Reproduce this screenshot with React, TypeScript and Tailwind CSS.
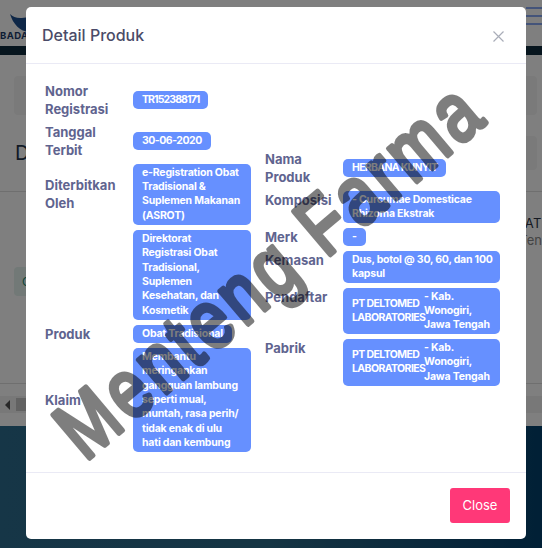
import { ReactNode } from "react";

const Badge = ({
  children,
  wide,
  tight,
}: {
  children: ReactNode;
  wide?: boolean;
  tight?: string;
}) => (
  <span
    className={`block rounded-[5px] bg-[#6690ff] py-[2px] pl-[9px] text-[10.5px] leading-[14.3px] font-bold whitespace-nowrap text-white ${wide ? "w-full" : "w-fit pr-[9px]"} ${tight ?? "tracking-[-0.2px]"}`}
  >
    {children}
  </span>
);

const Label = ({ children, top }: { children?: ReactNode; top?: boolean }) => (
  <span className={`text-[13px] leading-[18px] font-bold text-[#5f648f] ${top ? "self-start" : ""}`}>{children}</span>
);

const Company = () => (
  <span className="flex items-center rounded-[5px] bg-[#6690ff] py-[2px] pl-[9px] text-[10.5px] leading-[14.3px] font-bold whitespace-nowrap text-white">
    <span className="w-[72px] shrink-0 tracking-[-0.6px]">
      PT DELTOMED
      <br />
      LABORATORIES
    </span>
    <span className="tracking-[-0.2px]">
      - Kab.
      <br />
      Wonogiri,
      <br />
      Jawa Tengah
    </span>
  </span>
);

const App = () => {
  return (
    <div className="relative h-[548px] w-[542px] overflow-hidden bg-white font-['Inter','Noto_Sans',sans-serif]">
      {/* page behind the modal */}
      <div className="flex h-[426px] flex-col bg-white">
        <div className="relative flex h-[46px] items-end justify-between">
          <svg className="absolute top-[14px] left-[10px]" width="18" height="18" viewBox="0 0 18 18">
            <path d="M0 0 C4 4 9 5 18 3 L18 18 C10 17 3 10 0 0 Z" fill="#1c4f8f" />
          </svg>
          <span className="pb-[4px] text-[9.5px] leading-[12px] font-bold tracking-[0.4px] text-[#1b3a6a]">BADAN</span>
          <div className="flex flex-col gap-[6px] self-start pt-[7px]">
            <div className="h-[2px] w-[16px] bg-[#88a8f5]" />
            <div className="h-[2px] w-[16px] bg-[#88a8f5]" />
            <div className="h-[2px] w-[16px] bg-[#88a8f5]" />
          </div>
        </div>
        <div className="h-[9px] bg-[#0e2a3c]" />
        <div className="mt-[21px] mr-[5px] ml-[14px] h-[39px] rounded bg-[#f5f5f5]" />
        <div className="mt-[21px] mr-[5px] ml-[15px] flex h-[34px] items-center justify-between">
          <span className="text-[20px] text-[#24344d]">D</span>
          <span className="h-[34px] w-[100px] rounded bg-[#f5f5f5]" />
        </div>
        <div className="mt-[21px] border-t border-[#dedede]" />
        <div className="mt-[23px] flex justify-end text-[13px] leading-[17px] tracking-[0.5px] text-[#2b3344]">RAT</div>
        <div className="flex justify-end text-[13px] leading-[17px] text-[#888]">Ten</div>
        <div className="mt-[18px] ml-[14px] h-[29px] w-[40px] rounded bg-[#e4f3ee] pl-2 text-[12px] leading-[29px] text-[#1a8a6e]">C</div>
        <div className="mt-[87px] border-t border-[#dedede]" />
        <div className="mt-[12px] flex h-[17px] items-center bg-[#f1f1f1]">
          <span className="ml-[5px] h-0 w-0 border-y-[5px] border-r-[5px] border-y-transparent border-r-[#505050]" />
          <span className="ml-[6px] h-[13px] w-[10px] bg-[#c4c4c4]" />
        </div>
      </div>
      <div className="h-[122px] bg-gradient-to-r from-[#2c6c8e] via-[#2b6a88] to-[#02406c]" />

      <div className="absolute inset-0 bg-black/50" />

      {/* modal */}
      <div className="absolute top-[7px] left-[26px] flex h-[532px] w-[500px] flex-col rounded-[5px] bg-white">
        <div className="flex h-[57px] shrink-0 items-center justify-between border-b border-[#eaeaf5] pr-[22px] pl-[16px]">
          <h5 className="text-[16px] font-medium text-[#4a4b68]">Detail Produk</h5>
          <svg className="mt-[2px]" width="11" height="11" viewBox="0 0 11 11" fill="none" stroke="#a9adb8" strokeWidth="1.2">
            <path d="M0.5 0.5 L10.5 10.5 M10.5 0.5 L0.5 10.5" />
          </svg>
        </div>

        <div className="flex flex-1 items-center pr-[26px] pl-[19px]">
          <div className="-mt-[2px] grid w-[206px] shrink-0 grid-cols-[88px_118px] items-center gap-y-[5px]">
            <Label>
              Nomor
              <br />
              Registrasi
            </Label>
            <Badge tight="tracking-[-0.9px]">TR152388171</Badge>
            <Label>
              Tanggal
              <br />
              Terbit
            </Label>
            <Badge tight="tracking-[-0.5px]">30-06-2020</Badge>
            <Label>
              Diterbitkan
              <br />
              Oleh
            </Label>
            <Badge wide>
              e-Registration Obat
              <br />
              Tradisional &amp;
              <br />
              Suplemen Makanan
              <br />
              (ASROT)
            </Badge>
            <Label />
            <Badge wide>
              Direktorat
              <br />
              Registrasi Obat
              <br />
              Tradisional,
              <br />
              Suplemen
              <br />
              Kesehatan, dan
              <br />
              Kosmetik
            </Badge>
            <Label>Produk</Label>
            <Badge>Obat Tradisional</Badge>
            <Label>Klaim</Label>
            <Badge wide>
              Membantu
              <br />
              meringankan
              <br />
              gangguan lambung
              <br />
              seperti mual,
              <br />
              muntah, rasa perih/
              <br />
              tidak enak di ulu
              <br />
              hati dan kembung
            </Badge>
          </div>
          <div className="ml-[14px] grid flex-1 grid-cols-[78px_157px] items-center gap-y-[4.5px]">
            <Label>
              Nama
              <br />
              Produk
            </Label>
            <Badge tight="tracking-[-0.7px]">HERBANA KUNYIT</Badge>
            <Label top>Komposisi</Label>
            <Badge wide>
              - Curcumae Domesticae
              <br />
              Rhizoma Ekstrak
            </Badge>
            <Label top>Merk</Label>
            <Badge>-</Badge>
            <Label top>Kemasan</Label>
            <Badge wide>
              Dus, botol @ 30, 60, dan 100
              <br />
              kapsul
            </Badge>
            <Label top>Pendaftar</Label>
            <Company />
            <Label top>Pabrik</Label>
            <Company />
          </div>
        </div>

        <div className="flex h-[67px] shrink-0 items-center justify-end border-t border-[#eaeaf5] pr-[16px] pb-[1px]">
          <button className="h-[35px] w-[60px] rounded-[3px] bg-[#ff3878] text-[13px] text-white">Close</button>
        </div>
      </div>

      {/* watermark */}
      <svg className="absolute inset-0" width="542" height="548" viewBox="0 0 542 548">
        <text
          transform="translate(85 462) rotate(-40.2) scale(1 1.25)"
          textLength="526"
          lengthAdjust="spacing"
          fontFamily="'Liberation Sans', sans-serif"
          fontSize="66"
          fill="#000"
          stroke="#000"
          strokeWidth="4"
          strokeLinejoin="round"
          opacity="0.5"
        >
          Menteng Farma
        </text>
      </svg>
    </div>
  );
};

export default App;
